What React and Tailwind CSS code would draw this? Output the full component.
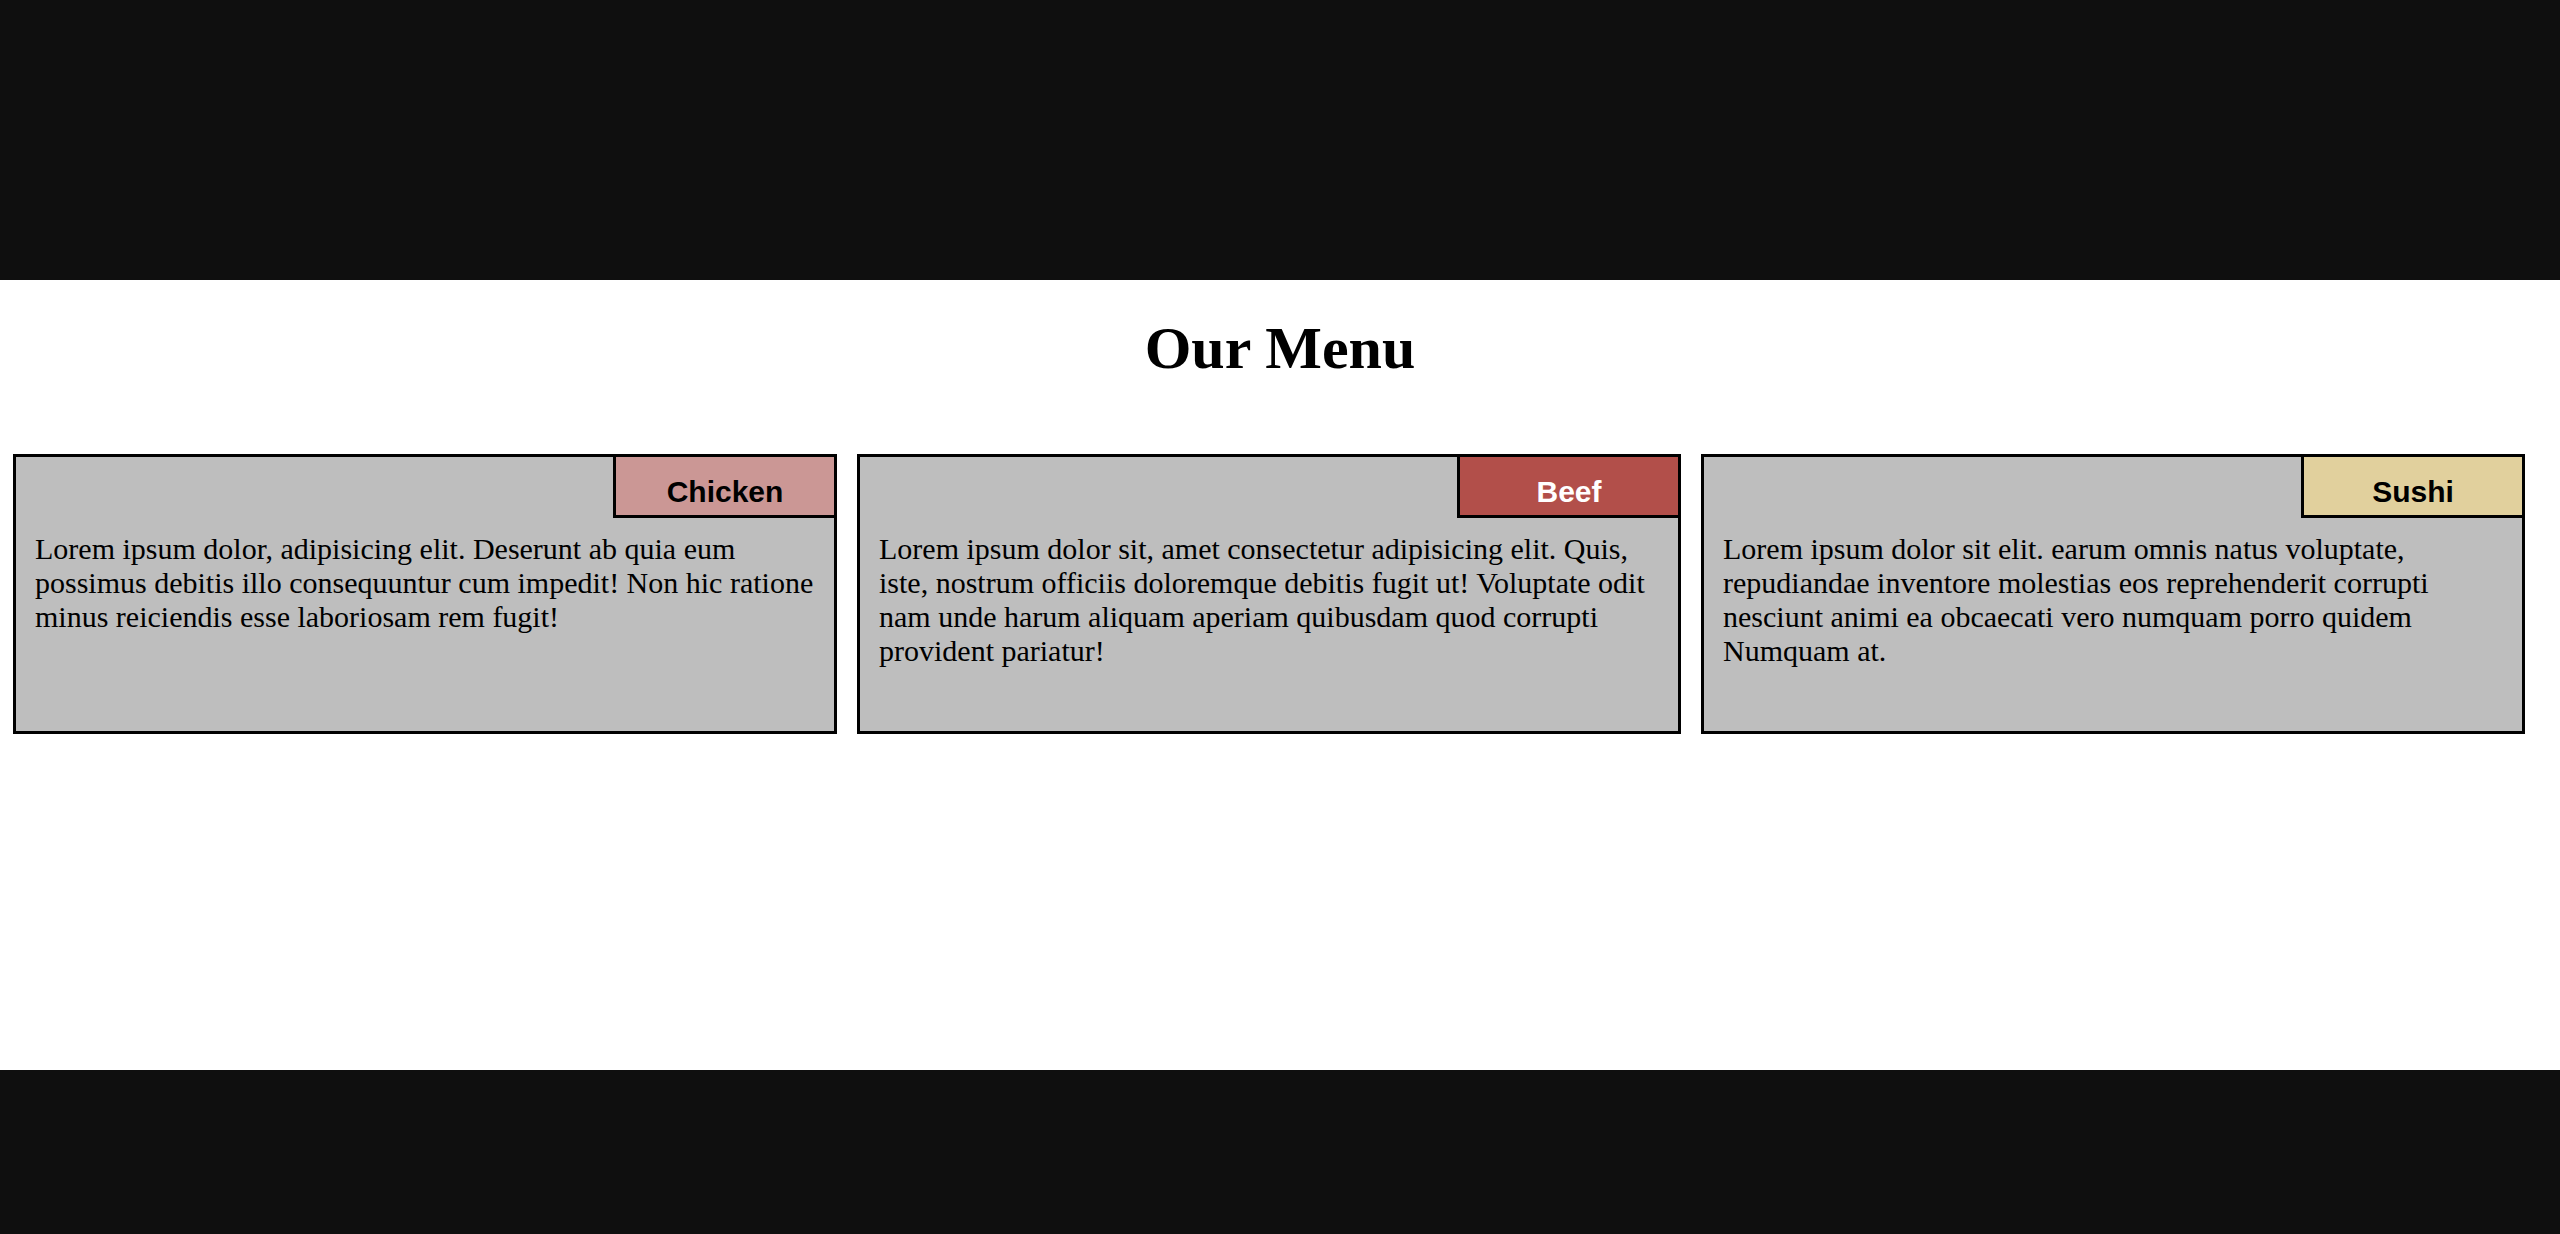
const ITEMS = [
  {
    name: 'Chicken',
    tag: 'bg-[#cb9795] text-black',
    text: 'Lorem ipsum dolor, adipisicing elit. Deserunt ab quia eum possimus debitis illo consequuntur cum impedit! Non hic ratione minus reiciendis esse laboriosam rem fugit!',
  },
  {
    name: 'Beef',
    tag: 'bg-[#b24f4a] text-white',
    text: 'Lorem ipsum dolor sit, amet consectetur adipisicing elit. Quis, iste, nostrum officiis doloremque debitis fugit ut! Voluptate odit nam unde harum aliquam aperiam quibusdam quod corrupti provident pariatur!',
  },
  {
    name: 'Sushi',
    tag: 'bg-[#e1d09d] text-black',
    text: 'Lorem ipsum dolor sit elit. earum omnis natus voluptate, repudiandae inventore molestias eos reprehenderit corrupti nesciunt animi ea obcaecati vero numquam porro quidem Numquam at.',
  },
]

// Menu page: dark header and footer bars, three item cards in between.
export default function App() {
  return (
    <div className="flex min-h-[1234px] flex-col bg-white font-['Liberation_Serif',serif] text-black">
      <header className="h-[280px] bg-[#0f0f0f]" />

      <main className="h-[790px]">
        <h1 className="mt-[35px] text-center text-[60px] font-bold leading-[66px]">Our Menu</h1>

        <div className="mt-[73px] flex gap-[20px] pl-[13px]">
          {ITEMS.map((item) => (
            <div key={item.name} className="flex h-[280px] w-[824px] flex-col border-[3px] border-black bg-[#bebebe]">
              <div
                className={`h-[61px] w-[221px] self-end border-b-[3px] border-l-[3px] border-black pt-[18px] text-center font-['Liberation_Sans',Arial,sans-serif] text-[30px] font-bold leading-[34px] ${item.tag}`}
              >
                {item.name}
              </div>
              <p className="pl-[19px] pr-[16px] pt-[14px] text-[30px] leading-[34px]">{item.text}</p>
            </div>
          ))}
        </div>
      </main>

      <footer className="flex-1 bg-[#0f0f0f]" />
    </div>
  )
}
